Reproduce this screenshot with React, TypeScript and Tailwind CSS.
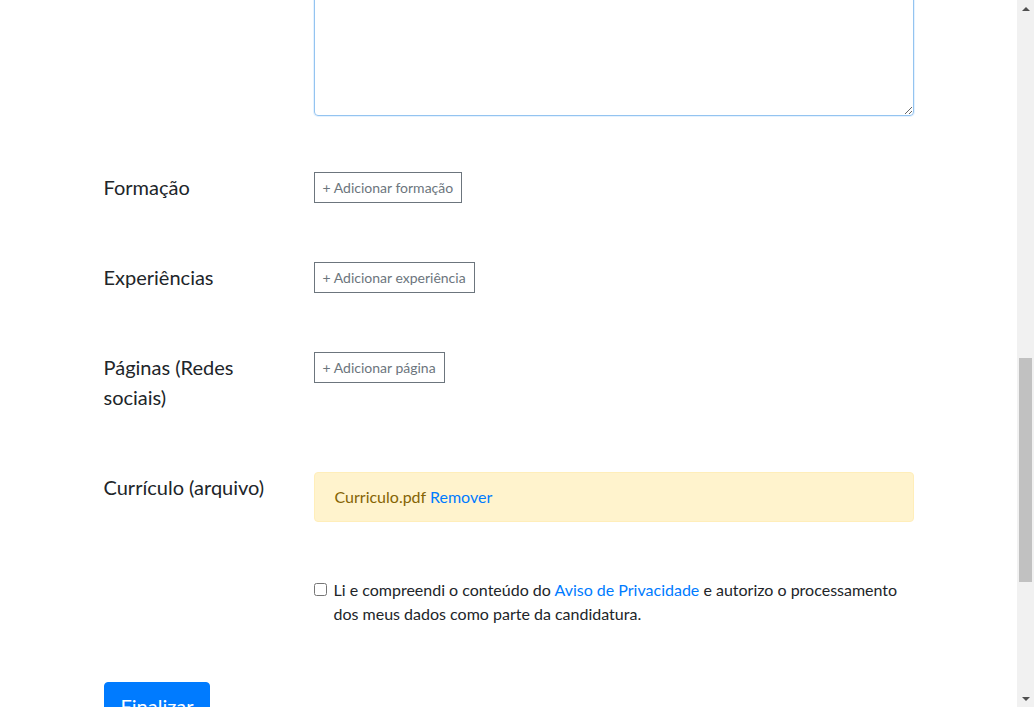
import React from 'react';

const font = { fontFamily: "Lato, 'Noto Sans', sans-serif" };

const AddButton: React.FC<{ label: string }> = ({ label }) => (
  <button
    type="button"
    className="border border-[#6c757d] bg-white px-2 py-1 text-[14px] leading-[21px] text-[#6c757d]"
  >
    + {label}
  </button>
);

const Row: React.FC<{ label: string; tall?: boolean; children: React.ReactNode }> = ({ label, tall, children }) => (
  <div className={tall ? 'grid grid-cols-[210px_600px] mb-[60px]' : 'grid grid-cols-[210px_600px] mb-[59px]'}>
    <label className="w-[180px] text-[20px] leading-[30px] text-[#212529]">{label}</label>
    <div>{children}</div>
  </div>
);

// the browser's scrollbar, as it stands in the screenshot
const ScrollBar: React.FC = () => (
  <div className="fixed right-0 top-0 h-screen w-[17px] bg-[#f1f1f1] flex flex-col items-center">
    <div className="h-[17px] flex items-center justify-center">
      <div className="w-0 h-0 border-l-4 border-r-4 border-b-4 border-l-transparent border-r-transparent border-b-[#505050]" />
    </div>
    <div className="flex-1 w-full">
      <div className="mt-[341px] mx-auto w-[13px] h-[224px] bg-[#c1c1c1]" />
    </div>
    <div className="h-[17px] flex items-center justify-center">
      <div className="w-0 h-0 border-l-4 border-r-4 border-t-4 border-l-transparent border-r-transparent border-t-[#505050]" />
    </div>
  </div>
);

const App: React.FC = () => {
  const areaRef = React.useRef<HTMLTextAreaElement>(null);

  React.useLayoutEffect(() => {
    const el = areaRef.current;
    if (!el) return;
    const bottom = el.getBoundingClientRect().bottom + window.scrollY;
    window.scrollTo(0, bottom - 116);
  }, []);

  return (
    <div className="bg-white text-[#212529] pr-[17px]" style={font}>
      <div className="w-[810px] mx-auto">
        {/* job header, above the visible part */}
        <div className="h-[701px] pt-16">
          <h1 className="text-[32px] leading-[40px] mb-4">Candidatura</h1>
          <p className="text-[16px] leading-[24px] text-[#6c757d]">
            Preencha o formulário abaixo para se candidatar à vaga.
          </p>
        </div>

        <Row label="Nome">
          <input className="w-full h-[38px] border border-[#ced4da] rounded px-3" />
        </Row>
        <Row label="E-mail">
          <input className="w-full h-[38px] border border-[#ced4da] rounded px-3" />
        </Row>
        <Row label="Telefone">
          <input className="w-full h-[38px] border border-[#ced4da] rounded px-3" />
        </Row>
        <div className="grid grid-cols-[210px_600px] mb-[56px]">
          <label className="w-[180px] text-[20px] leading-[30px]">Apresentação</label>
          <textarea
            ref={areaRef}
            className="block w-full h-[200px] border border-[#94c4f0] rounded px-3 py-2 outline-none shadow-[0_0_0_1px_rgba(0,123,255,0.1)]"
          />
        </div>

        <Row label="Formação">
          <AddButton label="Adicionar formação" />
        </Row>
        <Row label="Experiências">
          <AddButton label="Adicionar experiência" />
        </Row>
        <Row label="Páginas (Redes sociais)" tall>
          <AddButton label="Adicionar página" />
        </Row>
        <div className="grid grid-cols-[210px_600px] mb-[56px]">
          <label className="w-[180px] text-[20px] leading-[30px]">Currículo (arquivo)</label>
          <div className="border border-[#ffeeba] bg-[#fff3cd] rounded px-5 py-3 text-[16px] leading-[24px] text-[#856404]">
            Curriculo.pdf <a className="text-[#007bff]">Remover</a>
          </div>
        </div>

        <div className="grid grid-cols-[210px_600px] mb-[56px]">
          <div />
          <label className="relative pl-5 text-[16px] leading-[24px] text-[#212529]">
            <input type="checkbox" className="absolute left-0 top-[5px] w-[13px] h-[13px] m-0" />
            Li e compreendi o conteúdo do <a className="text-[#007bff]">Aviso de Privacidade</a> e autorizo o
            processamento dos meus dados como parte da candidatura.
          </label>
        </div>

        <button type="button" className="bg-[#007bff] border border-[#007bff] text-white text-[20px] leading-[30px] px-4 py-2 rounded">
          Finalizar
        </button>

        <div className="h-[318px]" />
      </div>
      <ScrollBar />
    </div>
  );
};

export default App;
